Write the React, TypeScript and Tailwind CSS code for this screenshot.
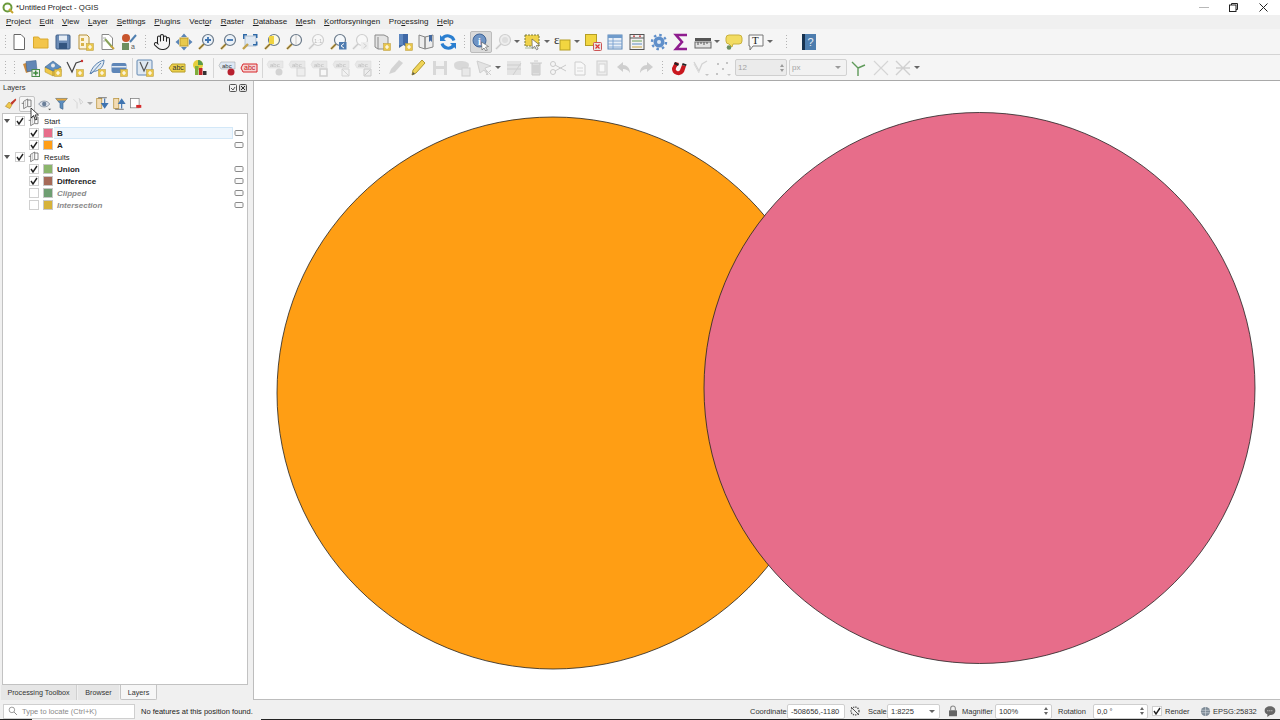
import React from "react";
import { Hand } from "lucide-react";

const Svg = ({ children, s = 18 }: { children: React.ReactNode; s?: number }) => (
  <svg width={s} height={s} viewBox="0 0 18 18" className="block shrink-0">
    {children}
  </svg>
);

const Badge = () => (
  <g>
    <rect x="10.5" y="10.5" width="7" height="7" fill="#e8c64c" stroke="#b9993a" strokeWidth="0.5" />
    <path d="M14 12v4M12 14h4" stroke="#fff" strokeWidth="1.2" />
  </g>
);

const Lens = ({ fill = "#fff", stroke = "#6b7a8a" }: { fill?: string; stroke?: string }) => (
  <g>
    <path d="M7 11l-5 5" stroke="#c2a24c" strokeWidth="2.4" />
    <path d="M7 11l-5 5" stroke="#333" strokeWidth="0.5" />
    <circle cx="11" cy="7" r="5.5" fill={fill} stroke={stroke} strokeWidth="1.2" />
  </g>
);

const Page = ({ stroke = "#777" }: { stroke?: string }) => (
  <path d="M4 1.5h7l3.5 3.5v11.5H4z" fill="#fff" stroke={stroke} strokeWidth="1" />
);

const Abc = ({ fill, c = "#333", y = 4 }: { fill: string; c?: string; y?: number }) => (
  <g>
    <path d={`M3 ${y}h14v7H3L1 ${y + 3.5}z`} fill={fill} stroke="#999" strokeWidth="0.5" />
    <text x="4" y={y + 5.7} fontSize="6" fontFamily="Liberation Sans" fill={c}>
      abc
    </text>
  </g>
);

const Gray = ({ children }: { children: React.ReactNode }) => (
  <div className="opacity-30 grayscale">{children}</div>
);

const Handle = ({ className = "w-[11px]" }: { className?: string }) => (
  <div className={`${className} h-[16px] flex justify-center shrink-0`}>
    <div className="w-[3px] h-[16px] bg-[radial-gradient(circle,#b4b4b4_0.8px,transparent_0.9px)] bg-[length:3px_3px]" />
  </div>
);

const Tool = ({ children, active }: { children: React.ReactNode; active?: boolean }) => (
  <div
    className={`w-[22px] h-[22px] flex items-center justify-center shrink-0 rounded-[2px] ${
      active ? "bg-[#dadada] border border-[#bcbcbc]" : ""
    }`}
  >
    {children}
  </div>
);

const Drop = ({ children }: { children: React.ReactNode }) => (
  <div className="w-[30px] h-[22px] flex items-center shrink-0">
    <div className="w-[22px] flex justify-center">{children}</div>
    <div className="w-0 h-0 border-x-[3px] border-x-transparent border-t-[3px] border-t-[#666]" />
  </div>
);

const Sep = ({ className }: { className: string }) => (
  <div className={`${className} h-[20px] flex justify-center shrink-0`}>
    <div className="w-px h-full bg-[#d6d6d6]" />
  </div>
);

const Menu = ({ text, u }: { text: string; u: number }) => (
  <span>
    {text.slice(0, u)}
    <span className="underline underline-offset-1">{text[u]}</span>
    {text.slice(u + 1)}
  </span>
);

const menus: [string, number][] = [
  ["Project", 0],
  ["Edit", 0],
  ["View", 0],
  ["Layer", 0],
  ["Settings", 0],
  ["Plugins", 0],
  ["Vector", 4],
  ["Raster", 0],
  ["Database", 0],
  ["Mesh", 0],
  ["Kortforsyningen", 0],
  ["Processing", 3],
  ["Help", 0],
];

const Row1 = () => (
  <div className="h-[26px] flex items-center pl-[3px] bg-[#f5f5f5] border-b border-[#d4d4d4]">
    <Handle className="w-[5px]" />
    <Tool>
      <Svg>
        <Page stroke="#666" />
      </Svg>
    </Tool>
    <Tool>
      <Svg>
        <path d="M1.5 4h5l1.5 2h8v9h-14.5z" fill="#f3c54a" stroke="#d9a92e" />
      </Svg>
    </Tool>
    <Tool>
      <Svg>
        <rect x="2" y="2" width="14" height="14" rx="1" fill="#6c8cb6" stroke="#3f5f88" />
        <rect x="5" y="2.5" width="8" height="5" fill="#e6edf5" />
        <rect x="5" y="10" width="8" height="6" fill="#33557f" />
      </Svg>
    </Tool>
    <Tool>
      <Svg>
        <path d="M3 2h8l2 2v12H3z" fill="#fbf3dc" stroke="#b58f35" />
        <rect x="5" y="5" width="3" height="3" fill="#d8b24a" />
        <rect x="5" y="10" width="3" height="3" fill="#d8b24a" />
        <Badge />
      </Svg>
    </Tool>
    <Tool>
      <Svg>
        <Page stroke="#888" />
        <path d="M7 6l7 8" stroke="#88a25a" strokeWidth="2" />
        <path d="M13 13l3 3" stroke="#c9a53e" strokeWidth="2" />
        <path d="M5 5h3M5 8h2" stroke="#aaa" />
      </Svg>
    </Tool>
    <Tool>
      <Svg>
        <circle cx="6" cy="5" r="4" fill="#c8552d" />
        <rect x="2" y="10" width="7" height="7" fill="#6d8f60" />
        <path d="M10 9l6-7" stroke="#4f7fb0" strokeWidth="2" />
        <text x="11" y="16" fontSize="7" fontFamily="Liberation Sans" fill="#555">
          a
        </text>
      </Svg>
    </Tool>
    <Handle />
    <Tool>
      <Hand size={18} strokeWidth={1.4} color="#222" />
    </Tool>
    <Tool>
      <Svg>
        <rect x="5" y="5" width="8" height="8" fill="#e8c94d" stroke="#b89a30" />
        <path d="M9 0.5l3 3.5H6zM9 17.5l3-3.5H6zM0.5 9l3.5 3V6zM17.5 9L14 12V6z" fill="#5b86b8" />
      </Svg>
    </Tool>
    <Tool>
      <Svg>
        <Lens fill="#eaf1f8" />
        <path d="M8 7h6M11 4v6" stroke="#3f74b0" strokeWidth="1.8" />
      </Svg>
    </Tool>
    <Tool>
      <Svg>
        <Lens fill="#eaf1f8" />
        <path d="M8 7h6" stroke="#3f74b0" strokeWidth="1.8" />
      </Svg>
    </Tool>
    <Tool>
      <Svg>
        <rect x="4" y="3" width="11" height="10" fill="#dfe8f2" stroke="#7d96b3" strokeWidth="0.5" />
        <path d="M2 1h4v1.5H3.5V6H2zM12 1h4.5v4H15V2.5h-3zM12 11h3V8.5h1.5V12.5H12z" fill="#2f6aa8" />
        <path d="M7 11l-5 5" stroke="#c2a24c" strokeWidth="2.4" />
      </Svg>
    </Tool>
    <Tool>
      <Svg>
        <Lens fill="#fdfbe0" />
        <rect x="6" y="3" width="5" height="8" fill="#f0d33f" />
      </Svg>
    </Tool>
    <Tool>
      <Svg>
        <Lens fill="#f7f7f7" />
        <path d="M11 2v10" stroke="#c9c9c9" strokeWidth="1" />
      </Svg>
    </Tool>
    <Tool>
      <Gray>
        <Svg>
          <Lens />
          <text x="7" y="9.5" fontSize="6" fontFamily="Liberation Sans" fill="#333">
            1:1
          </text>
        </Svg>
      </Gray>
    </Tool>
    <Tool>
      <Svg>
        <Lens fill="#f5f8fb" />
        <rect x="10" y="9" width="7.5" height="7.5" fill="#4f7cb0" />
        <path d="M15 10.5l-3 2.3 3 2.3" stroke="#fff" fill="none" />
      </Svg>
    </Tool>
    <Tool>
      <Gray>
        <Svg>
          <Lens />
          <rect x="10" y="9" width="7.5" height="7.5" fill="#ddd" />
          <path d="M12.5 10.5l3 2.3-3 2.3" stroke="#777" fill="none" />
        </Svg>
      </Gray>
    </Tool>
    <Tool>
      <Svg>
        <path d="M2 2h9l4 2v12H5l-3-2z" fill="#e4e4e4" stroke="#8a8a8a" />
        <path d="M5 4v12" stroke="#8a8a8a" />
        <Badge />
      </Svg>
    </Tool>
    <Tool>
      <Svg>
        <path d="M4 1h9v14l-4.5-3L4 15z" fill="#3f68a6" />
        <path d="M4 1h4v11H4z" fill="#5d87c0" />
        <Badge />
      </Svg>
    </Tool>
    <Tool>
      <Svg>
        <path d="M2 2l6 2v12l-6-2zM8 4l8-2v12l-8 2z" fill="#ededed" stroke="#868686" />
        <path d="M12 2h3v7l-1.5-1.5L12 9z" fill="#44699f" />
      </Svg>
    </Tool>
    <Tool>
      <Svg>
        <path d="M15 7.5A6.5 6.5 0 0 0 3.5 5.5" fill="none" stroke="#2b7fd0" strokeWidth="3" />
        <path d="M1 2v6h6z" fill="#2b7fd0" />
        <path d="M3 10.5A6.5 6.5 0 0 0 14.5 12.5" fill="none" stroke="#2b7fd0" strokeWidth="3" />
        <path d="M17 16v-6h-6z" fill="#2b7fd0" />
      </Svg>
    </Tool>
    <Handle />
    <Tool active>
      <Svg>
        <circle cx="7.5" cy="7.5" r="6.5" fill="#6f94c4" stroke="#3e6396" />
        <text x="6" y="11.5" fontSize="10" fontWeight="700" fontFamily="Liberation Serif" fill="#fff">
          i
        </text>
        <path d="M9.5 9l7 4.500-3 .7 1.800 3-1.500.8-1.800-3-2 2z" fill="#fff" stroke="#555" strokeWidth="0.6" />
      </Svg>
    </Tool>
    <Drop>
      <Gray>
        <Svg>
          <Lens fill="#ddd" />
          <circle cx="11" cy="7" r="3" fill="#aaa" />
        </Svg>
      </Gray>
    </Drop>
    <Drop>
      <Svg>
        <rect x="1" y="2" width="14" height="11" fill="#efd24a" stroke="#7a7a3a" strokeDasharray="2 1" />
        <path d="M1 14h11v2H1z" fill="#cfd8c8" />
        <path d="M8 6l7.5 6-3.2.5 1.8 3.5-1.6.8-1.8-3.5-2.5 2z" fill="#fff" stroke="#444" strokeWidth="0.6" />
      </Svg>
    </Drop>
    <Drop>
      <Svg>
        <rect x="6" y="7" width="10" height="10" fill="#f2d640" stroke="#b59e25" />
        <text x="0" y="11" fontSize="13" fontFamily="Liberation Serif" fill="#333">
          ε
        </text>
      </Svg>
    </Drop>
    <Tool>
      <Svg>
        <rect x="1.5" y="1.5" width="11" height="11" fill="#f2d640" stroke="#b59e25" />
        <rect x="9.5" y="9.5" width="8" height="8" rx="1" fill="#e6e6e6" stroke="#c55" />
        <path d="M11.5 11.5l4 4M15.5 11.5l-4 4" stroke="#d33" strokeWidth="1.2" />
      </Svg>
    </Tool>
    <Tool>
      <Svg>
        <rect x="2" y="2" width="14" height="14" fill="#e8eff7" stroke="#5c87b8" />
        <rect x="2" y="2" width="14" height="3" fill="#6f9bcb" />
        <path d="M2 8h14M2 11h14M2 14h14M7 5v11" stroke="#6f9bcb" strokeWidth="0.8" />
      </Svg>
    </Tool>
    <Tool>
      <Svg>
        <rect x="2" y="1.5" width="14" height="15" fill="#f2f2f2" stroke="#555" />
        <path d="M2 5h14" stroke="#555" />
        <path d="M4 8h10" stroke="#6a9e56" />
        <path d="M4 11h10" stroke="#5f8bc0" />
        <path d="M4 14h10" stroke="#c9a53e" />
        <circle cx="6" cy="3.2" r="1" fill="#c55" />
        <circle cx="12" cy="3.2" r="1" fill="#c55" />
      </Svg>
    </Tool>
    <Tool>
      <Svg>
        <circle cx="9" cy="9" r="5.5" fill="#5f8fca" />
        <circle cx="9" cy="9" r="7" fill="none" stroke="#5f8fca" strokeWidth="2.4" strokeDasharray="2.5 3" />
        <circle cx="9" cy="9" r="2" fill="#dfe9f5" />
      </Svg>
    </Tool>
    <Tool>
      <Svg>
        <path d="M15 2H4l6 7-6 7h11" fill="none" stroke="#8f1d8f" strokeWidth="2.6" />
      </Svg>
    </Tool>
    <Drop>
      <Svg>
        <rect x="1" y="5" width="16" height="3" fill="#555" />
        <rect x="1" y="9" width="16" height="6" fill="#e2e2e2" stroke="#666" />
        <path d="M4 9v3M7 9v2M10 9v3M13 9v2" stroke="#555" />
      </Svg>
    </Drop>
    <div className="w-px shrink-0" />
    <Tool>
      <Svg>
        <path d="M4 2h10a3 3 0 0 1 3 3v3a3 3 0 0 1-3 3H8l-1 3-3-3a3 3 0 0 1-3-3V5a3 3 0 0 1 3-3z" fill="#f2dc62" stroke="#c9b13e" />
        <circle cx="4" cy="14.5" r="2.3" fill="#6d9060" />
      </Svg>
    </Tool>
    <Drop>
      <Svg>
        <path d="M2 2h14v11H6l-3 4v-4H2z" fill="#fafafa" stroke="#777" />
        <text x="5" y="11" fontSize="11" fontFamily="Liberation Serif" fill="#222">
          T
        </text>
      </Svg>
    </Drop>
    <Handle className="w-[23px]" />
    <Tool>
      <Svg>
        <rect x="2" y="1" width="14" height="16" fill="#4d7dae" />
        <rect x="2" y="1" width="3" height="16" fill="#17324f" />
        <text x="7.5" y="13" fontSize="11" fontFamily="Liberation Sans" fill="#e6eef6">
          ?
        </text>
      </Svg>
    </Tool>
  </div>
);

const GrayAbc = ({ kind }: { kind: number }) => (
  <Gray>
    <Svg>
      <Abc fill="#ccc" y={2} />
      {kind === 0 && <circle cx="13" cy="13" r="3.5" fill="#888" />}
      {kind === 1 && <rect x="9" y="9" width="8" height="8" fill="#ddd" stroke="#888" />}
      {kind === 2 && <rect x="10" y="10" width="7" height="7" fill="#fff" stroke="#777" strokeWidth="1.5" />}
      {kind === 3 && <path d="M10 10h7v7h-7zM10 10l7 7" fill="#eee" stroke="#888" />}
      {kind === 4 && <path d="M10 10h7v7h-7zM11 16l5-5" fill="#ddd" stroke="#666" />}
    </Svg>
  </Gray>
);

const Row2 = () => (
  <div className="h-[26px] flex items-center pl-[3px] bg-[#f5f5f5] border-b border-[#a9a9a9]">
    <Handle className="w-[5px]" />
    <Handle className="w-[12px]" />
    <Tool>
      <Svg>
        <path d="M1 5l9-3 3 9-9 3z" fill="#c98a3e" />
        <path d="M4 2.5l10-1 1 10-10 1z" fill="#6287b5" stroke="#3d5f8a" strokeWidth="0.5" />
        <rect x="10" y="10.5" width="7.5" height="7" fill="#eee" stroke="#4a8b4a" />
        <path d="M13.7 11.5v5M11.2 14h5" stroke="#3e8a3e" strokeWidth="1.5" />
      </Svg>
    </Tool>
    <Tool>
      <Svg>
        <path d="M1 8l8 4v5l-8-4zM9 12l8-4v5l-8 4z" fill="#f0c94b" stroke="#a98c2a" strokeWidth="0.5" />
        <path d="M1 8l8-6 8 6-8 4z" fill="#5f8ec0" stroke="#33577f" strokeWidth="0.5" />
        <circle cx="9" cy="6.5" r="2" fill="#e9e9e9" />
        <Badge />
      </Svg>
    </Tool>
    <Tool>
      <Svg>
        <path d="M1 3l5 10 4-9 6-2" fill="none" stroke="#444" strokeWidth="1.2" />
        <circle cx="16" cy="2" r="1.2" fill="#c33" />
        <Badge />
      </Svg>
    </Tool>
    <Tool>
      <Svg>
        <path d="M2 15C4 8 9 3 16 1c0 6-4 10-8 11-2 .5-4 1-6 3z" fill="#dfe9f3" stroke="#5b83b0" />
        <path d="M3 15L13 4" stroke="#5b83b0" />
        <Badge />
      </Svg>
    </Tool>
    <Tool>
      <Svg>
        <rect x="1.5" y="4" width="15" height="10" rx="2" fill="#5e86b8" />
        <rect x="1.5" y="7" width="15" height="1.5" fill="#dfe8f2" />
        <Badge />
      </Svg>
    </Tool>
    <Sep className="w-[4px]" />
    <Tool>
      <Svg>
        <rect x="1" y="1" width="15" height="15" rx="1" fill="#dfe8f1" stroke="#6288b2" />
        <path d="M4 3l4 9 4-9" fill="none" stroke="#555" strokeWidth="1.2" />
        <Badge />
      </Svg>
    </Tool>
    <Handle className="w-[10px]" />
    <Tool>
      <Svg>
        <path d="M4 5h13v8H4L1 9z" fill="#ecd04a" stroke="#b89e2a" />
        <text x="4.5" y="11" fontSize="7" fontFamily="Liberation Sans" fill="#333">
          abc
        </text>
      </Svg>
    </Tool>
    <div className="w-px shrink-0" />
    <Tool>
      <Svg>
        <circle cx="7" cy="6" r="5" fill="#e6cf3c" />
        <path d="M7 6V1a5 5 0 0 1 5 5z" fill="#5a9a4a" />
        <rect x="4" y="7" width="3.5" height="9" fill="#7fae3c" />
        <rect x="8" y="9" width="3.5" height="7" fill="#c3272b" />
        <rect x="12" y="12" width="3.5" height="4" fill="#333" />
      </Svg>
    </Tool>
    <Sep className="w-[5px]" />
    <Tool>
      <Svg>
        <Abc fill="#dde8f4" y={3} />
        <circle cx="13" cy="13" r="3.5" fill="#b8212f" />
      </Svg>
    </Tool>
    <Tool>
      <Svg>
        <path d="M3 5h14v8H3L1 9z" fill="#f6d3d3" stroke="#d7262b" />
        <text x="4" y="11" fontSize="7" fontFamily="Liberation Sans" fill="#c2171c">
          abc
        </text>
      </Svg>
    </Tool>
    <Sep className="w-[4px]" />
    {[0, 1, 2, 3, 4].map((k) => (
      <Tool key={k}>
        <GrayAbc kind={k} />
      </Tool>
    ))}
    <Handle />
    <Tool>
      <Gray>
        <Svg>
          <path d="M2 15l2-5 8-9 4 3-8 9z" fill="#888" />
        </Svg>
      </Gray>
    </Tool>
    <Tool>
      <Svg>
        <path d="M3 16l1-5 9-10 3 3-9 10z" fill="#f0d458" stroke="#b19a2f" />
        <path d="M3 16l1-3 2 2z" fill="#555" />
      </Svg>
    </Tool>
    <Tool>
      <Gray>
        <Svg>
          <rect x="2" y="2" width="14" height="14" fill="#999" />
          <rect x="5" y="2" width="8" height="5" fill="#eee" />
          <rect x="5" y="10" width="8" height="6" fill="#eee" />
        </Svg>
      </Gray>
    </Tool>
    <Tool>
      <Gray>
        <Svg>
          <path d="M1 6c0-3 3-4 7-4s8 1 8 4-3 5-8 5-7-2-7-5z" fill="#999" />
          <rect x="9" y="9" width="8" height="8" fill="#ccc" stroke="#777" />
        </Svg>
      </Gray>
    </Tool>
    <Drop>
      <Gray>
        <Svg>
          <path d="M2 2l14 5-6 2 3 7-4-5-4 3z" fill="#bbb" stroke="#777" />
          <path d="M11 11l5 5M16 11l-5 5" stroke="#777" />
        </Svg>
      </Gray>
    </Drop>
    <Tool>
      <Gray>
        <Svg>
          <path d="M2 2h14v14H2z" fill="#bbb" />
          <path d="M2 6h14M2 10h14M16 4L8 16" stroke="#777" />
        </Svg>
      </Gray>
    </Tool>
    <Tool>
      <Gray>
        <Svg>
          <path d="M3 4h12M5 4v12h8V4M7 2h4" fill="#aaa" stroke="#666" />
          <path d="M7 6v8M9 6v8M11 6v8" stroke="#666" />
        </Svg>
      </Gray>
    </Tool>
    <Tool>
      <Gray>
        <Svg>
          <circle cx="4" cy="5" r="2.5" fill="none" stroke="#666" />
          <circle cx="4" cy="13" r="2.5" fill="none" stroke="#666" />
          <path d="M6 6l11 6M6 12l11-6" stroke="#666" />
        </Svg>
      </Gray>
    </Tool>
    <Tool>
      <Gray>
        <Svg>
          <path d="M4 3h6l4 3v10H4z" fill="#fff" stroke="#777" />
          <path d="M6 9h6M6 12h6" stroke="#999" />
        </Svg>
      </Gray>
    </Tool>
    <Tool>
      <Gray>
        <Svg>
          <rect x="4" y="2" width="10" height="14" fill="#ddd" stroke="#777" />
          <rect x="6" y="5" width="6" height="8" fill="#fff" stroke="#888" />
        </Svg>
      </Gray>
    </Tool>
    <Tool>
      <Gray>
        <Svg>
          <path d="M8 3L2 8l6 5v-3c3 0 5 1 7 4 0-5-3-8-7-8z" fill="#777" />
        </Svg>
      </Gray>
    </Tool>
    <Tool>
      <Gray>
        <Svg>
          <path d="M10 3l6 5-6 5v-3c-3 0-5 1-7 4 0-5 3-8 7-8z" fill="#777" />
        </Svg>
      </Gray>
    </Tool>
    <Handle />
    <Tool>
      <Svg>
        <path d="M5 3L2 9a6.5 6.5 0 0 0 12 4l2-6-4-1-2 5a2 2 0 0 1-4-2l3-5z" fill="#c9171e" />
        <path d="M5 3l4 2-1 2-4-2z" fill="#222" />
        <path d="M16 7l-4-1 .7-2 4 1.5z" fill="#222" />
      </Svg>
    </Tool>
    <Tool>
      <Gray>
        <Svg>
          <path d="M2 3l5 9 3-7 5-3" fill="none" stroke="#5a9a4a" strokeWidth="1.3" />
          <path d="M2 5l5 9" stroke="#999" />
          <path d="M13 15h4l-2 2z" fill="#555" />
        </Svg>
      </Gray>
    </Tool>
    <Tool>
      <Gray>
        <Svg>
          <path d="M3 4h2v2H3zM12 3h2v2h-2zM8 9h2v2H8zM2 14h2v2H2z" fill="#555" />
          <path d="M13 15h4l-2 2z" fill="#555" />
        </Svg>
      </Gray>
    </Tool>
    <div className="w-[1px] shrink-0" />
    <div className="w-[52px] h-[17px] flex items-center justify-between bg-[#ebebeb] border border-[#cfcfcf] rounded-[2px] pl-[2px] text-[#a5a5a5]">
      <span>12</span>
      <span className="w-[9px] flex flex-col items-center gap-[2px]">
        <span className="w-0 h-0 border-x-[2px] border-x-transparent border-b-[3px] border-b-[#9a9a9a]" />
        <span className="w-0 h-0 border-x-[2px] border-x-transparent border-t-[3px] border-t-[#9a9a9a]" />
      </span>
    </div>
    <div className="w-[58px] ml-[2px] h-[17px] flex items-center justify-between bg-[#f2f2f2] border border-[#d2d2d2] rounded-[2px] pl-[2px] pr-[5px] text-[#a5a5a5]">
      <span>px</span>
      <span className="w-0 h-0 border-x-[3px] border-x-transparent border-t-[3px] border-t-[#9a9a9a]" />
    </div>
    <div className="w-px shrink-0" />
    <Tool>
      <Svg>
        <path d="M8 9l-6-6M8 9l7-3M8 9v8" stroke="#5f9a5a" strokeWidth="1.4" />
      </Svg>
    </Tool>
    <Tool>
      <Gray>
        <Svg>
          <path d="M2 2l14 14M16 2L2 16" stroke="#6a9a6a" strokeWidth="1.2" />
        </Svg>
      </Gray>
    </Tool>
    <Drop>
      <Gray>
        <Svg>
          <path d="M2 2l7 7-7 7M16 2L9 9l7 7M2 9h14" stroke="#5a8a5a" strokeWidth="1.4" fill="none" />
        </Svg>
      </Gray>
    </Drop>
  </div>
);

const TreeIcon = () => (
  <Svg s={12}>
    <path d="M4 5l6-3.5v11L4 16z" fill="#fff" stroke="#666" strokeWidth="1.2" />
    <path d="M10 3h5v10h-5M1 8h3" fill="none" stroke="#666" strokeWidth="1.2" />
    <path d="M7 4v9" stroke="#aaa" />
  </Svg>
);

const Check = ({ on }: { on: boolean }) => (
  <div className="w-[10px] h-[10px] bg-white border border-[#d0d0d0] flex items-center justify-center shrink-0">
    {on && (
      <svg width="8" height="8" viewBox="0 0 8 8">
        <path d="M1 4l2 3 4-6" fill="none" stroke="#222" strokeWidth="1.4" />
      </svg>
    )}
  </div>
);

const Indicator = () => (
  <svg width="10" height="8" viewBox="0 0 10 8" className="shrink-0">
    <rect x="1" y="1.5" width="8" height="5" rx="1" fill="#fafafa" stroke="#8a8a8a" />
  </svg>
);

const GroupRow = ({ name }: { name: string }) => (
  <div className="h-[12px] flex items-center">
    <div className="ml-[1px] w-0 h-0 border-x-[3.5px] border-x-transparent border-t-[4px] border-t-[#555]" />
    <div className="ml-[5px]">
      <Check on />
    </div>
    <div className="ml-[3px]">
      <TreeIcon />
    </div>
    <span className="ml-[4px] pt-[1px] text-[#222] text-[7.7px]">{name}</span>
  </div>
);

const LayerRow = ({
  name,
  swatch,
  on,
  selected,
  className,
}: {
  name: string;
  swatch: string;
  on: boolean;
  selected?: boolean;
  className: string;
}) => (
  <div className="h-[12px] flex items-center relative">
    <div className="ml-[26px]">
      <Check on={on} />
    </div>
    <div className="ml-[4px] w-[10px] h-[10px] border border-[#c8c8c8] shrink-0" style={{ backgroundColor: swatch }} />
    <div
      className={`ml-[1px] h-[12px] flex-1 flex items-center pl-[3px] ${
        selected ? "bg-[#eef6fd] border-y border-r border-[#d3e8f8]" : ""
      }`}
    >
      <span className={`pt-[1px] ${className}`}>{name}</span>
    </div>
    <div className="w-[11px] mr-[3px] flex justify-center">
      <Indicator />
    </div>
  </div>
);

const LayersPanel = () => (
  <div className="w-[253px] shrink-0 flex flex-col relative">
    <div className="h-[13px] flex items-center justify-between pl-[3px] pr-[6px] text-[#333]">
      <span className="text-[7.5px]">Layers</span>
      <div className="flex gap-[2px]">
        <svg width="8" height="8" viewBox="0 0 8 8">
          <rect x="0.5" y="0.5" width="7" height="7" rx="1" fill="none" stroke="#555" />
          <path d="M2 4l2 2 2-3" fill="none" stroke="#555" />
        </svg>
        <svg width="8" height="8" viewBox="0 0 8 8">
          <rect x="0.5" y="0.5" width="7" height="7" rx="1" fill="#ddd" stroke="#555" />
          <path d="M2 2l4 4M6 2L2 6" stroke="#333" />
        </svg>
      </div>
    </div>
    <div className="h-[19px] flex items-center pl-[3px]">
      <div className="w-[14px] flex justify-center">
        <Svg s={13}>
          <path d="M2 13l5-6 4 4-3 5z" fill="#f0c94b" stroke="#b58f35" />
          <path d="M9 8l7-6 1 2-6 7z" fill="#c0392b" />
        </Svg>
      </div>
      <div className="ml-[2px] w-[16px] h-[16px] flex items-center justify-center bg-[#f6f6f6] border border-[#c4c4c4] rounded-[2px]">
        <TreeIcon />
      </div>
      <div className="ml-[1px] w-[18px] flex justify-center">
        <Svg s={14}>
          <path d="M1 9c3-5 11-5 14 0-3 5-11 5-14 0z" fill="#dfe4ec" stroke="#7a8798" />
          <circle cx="8" cy="9" r="2.8" fill="#6a7f99" />
          <path d="M13 15h4l-2 2z" fill="#555" />
        </Svg>
      </div>
      <div className="w-[14px] flex justify-center">
        <Svg s={13}>
          <path d="M1 2h16l-6 7v8l-4-2V9z" fill="#5b8dbf" stroke="#3c668f" />
          <path d="M1 2h16l-2 3H3z" fill="#e5a63b" />
        </Svg>
      </div>
      <div className="ml-[3px] w-[23px] flex items-center justify-center gap-[2px]">
        <Gray>
          <Svg s={13}>
            <path d="M2 3l5 5v8M10 2l5 5-3 3z" fill="none" stroke="#777" />
          </Svg>
        </Gray>
        <span className="w-0 h-0 border-x-[3px] border-x-transparent border-t-[3px] border-t-[#aaa]" />
      </div>
      <div className="w-[16px] flex justify-center">
        <Svg s={13}>
          <rect x="1" y="2" width="7" height="14" fill="#f3dcb4" stroke="#b58f35" />
          <path d="M12 2v8M8 9l4 6 4-6z" fill="#3f74b0" stroke="#3f74b0" strokeWidth="1.6" />
          <path d="M3 1h12" stroke="#444" />
        </Svg>
      </div>
      <div className="ml-[1px] w-[16px] flex justify-center">
        <Svg s={13}>
          <rect x="1" y="2" width="7" height="14" fill="#f3dcb4" stroke="#b58f35" />
          <path d="M12 16V8M8 9l4-6 4 6z" fill="#3f74b0" stroke="#3f74b0" strokeWidth="1.6" />
          <path d="M3 17h12" stroke="#444" />
        </Svg>
      </div>
      <div className="w-[16px] flex justify-center">
        <Svg s={13}>
          <rect x="2" y="2" width="12" height="13" fill="#fff" stroke="#777" />
          <rect x="10" y="11" width="7" height="4" fill="#d62c2c" />
        </Svg>
      </div>
    </div>
    <div className="flex-1 ml-[2px] mr-[5px] bg-white border border-[#c2c2c2] pt-[1px]">
      <GroupRow name="Start" />
      <LayerRow name="B" swatch="#e76d8a" on selected className="font-bold text-[#222]" />
      <LayerRow name="A" swatch="#ff9e17" on className="font-bold text-[#222]" />
      <GroupRow name="Results" />
      <LayerRow name="Union" swatch="#8bb56c" on className="font-bold text-[#222]" />
      <LayerRow name="Difference" swatch="#a66a58" on className="font-bold text-[#222]" />
      <LayerRow name="Clipped" swatch="#6f9e72" on={false} className="italic font-bold text-[#8a8a8a]" />
      <LayerRow name="Intersection" swatch="#d6b23a" on={false} className="italic font-bold text-[#8a8a8a]" />
    </div>
    <div className="h-[15px] flex items-start pl-[1px] text-[#333] text-[7.2px] whitespace-nowrap">
      <div className="w-[76px] h-[15px] pt-[1px] flex items-center justify-center bg-[#e6e6e6] border-r border-[#d0d0d0]">
        Processing Toolbox
      </div>
      <div className="w-[41px] ml-[1px] h-[15px] pt-[1px] flex items-center justify-center bg-[#e6e6e6]">Browser</div>
      <div className="w-[37px] ml-[1px] h-[15px] pt-[1px] flex items-center justify-center bg-[#f6f6f6] border-x border-b border-[#c4c4c4] rounded-b-[2px]">
        Layers
      </div>
    </div>
    <svg width="10" height="14" viewBox="0 0 10 14" className="absolute left-[30px] top-[26px]">
      <path d="M1 1v10l2.5-2.5L5.5 13l1.5-.7L5 8h3.5z" fill="#fff" stroke="#111" strokeWidth="0.8" />
    </svg>
  </div>
);

const StatusInput = ({ className, text, kind }: { className: string; text: string; kind: "none" | "combo" | "spin" }) => (
  <div className={`${className} h-[15px] bg-white border border-[#cfcfcf] rounded-[2px] flex items-center justify-between pl-[3px] pr-[2px] shrink-0`}>
    <span className="whitespace-nowrap pt-[1px]">{text}</span>
    {kind === "combo" && (
      <span className="w-0 h-0 mr-[2px] border-x-[3px] border-x-transparent border-t-[3px] border-t-[#666]" />
    )}
    {kind === "spin" && (
      <span className="flex flex-col items-center gap-[2px] w-[7px]">
        <span className="w-0 h-0 border-x-[2.5px] border-x-transparent border-b-[3px] border-b-[#666]" />
        <span className="w-0 h-0 border-x-[2.5px] border-x-transparent border-t-[3px] border-t-[#666]" />
      </span>
    )}
  </div>
);

const StatusBar = () => (
  <div className="h-[20px] flex items-center text-[#333] text-[7.5px] shrink-0 pt-[2px] relative">
    <div className="ml-[3px] w-[132px] h-[15px] bg-white border border-[#cfcfcf] flex items-center pl-[4px] gap-[4px] text-[#8a8a8a] shrink-0">
      <Svg s={10}>
        <circle cx="7" cy="7" r="5" fill="none" stroke="#8a8a8a" strokeWidth="1.5" />
        <path d="M11 11l5 5" stroke="#8a8a8a" strokeWidth="1.8" />
      </Svg>
      <span className="pt-[1px]">Type to locate (Ctrl+K)</span>
    </div>
    <span className="ml-[6px] pt-[1px] text-[#222] whitespace-nowrap">No features at this position found.</span>
    <div className="flex-1" />
    <span className="w-[37px] pt-[1px] shrink-0">Coordinate</span>
    <StatusInput className="w-[58px]" text="-508656,-1180" kind="none" />
    <div className="ml-[4px]">
      <Svg s={12}>
        <path d="M3 3l12 12" stroke="#444" strokeWidth="1.4" />
        <circle cx="9" cy="9" r="6" fill="none" stroke="#555" strokeWidth="2" strokeDasharray="2 1.5" />
      </Svg>
    </div>
    <span className="ml-[7px] w-[16px] pt-[1px] shrink-0">Scale</span>
    <StatusInput className="ml-[3px] w-[53px]" text="1:8225" kind="combo" />
    <div className="ml-[7px]">
      <Svg s={12}>
        <rect x="3" y="8" width="12" height="9" rx="1" fill="#666" />
        <path d="M5.5 8V5a3.5 3.5 0 0 1 7 0v3" fill="none" stroke="#888" strokeWidth="1.6" />
      </Svg>
    </div>
    <span className="ml-[3px] w-[30px] pt-[1px] shrink-0">Magnifier</span>
    <StatusInput className="ml-[3px] w-[57px]" text="100%" kind="spin" />
    <span className="ml-[6px] w-[28px] pt-[1px] shrink-0">Rotation</span>
    <StatusInput className="ml-[7px] w-[55px]" text="0,0 °" kind="spin" />
    <div className="ml-[4px]">
      <Check on />
    </div>
    <span className="ml-[3px] w-[24px] pt-[1px] shrink-0">Render</span>
    <div className="ml-[11px]">
      <Svg s={11}>
        <circle cx="9" cy="9" r="7.5" fill="#7d8a96" />
        <path d="M2 7h14M2 11h14M9 1.5v15" stroke="#d5dbe0" />
      </Svg>
    </div>
    <span className="ml-[2px] w-[41px] pt-[1px] shrink-0">EPSG:25832</span>
    <div className="ml-[10px] mr-[4px]">
      <Svg s={12}>
        <path d="M9 2c4.5 0 8 2.5 8 6.5s-3.5 6.5-8 6.5l-4 3v-4C2.5 13 1 11 1 8.5 1 4.5 4.5 2 9 2z" fill="#666" />
        <path d="M5 8.5h8" stroke="#ddd" strokeWidth="1.6" strokeDasharray="1.5 1.5" />
      </Svg>
    </div>
    <div className="absolute left-0 w-[32px] bottom-0 h-px bg-[#222]" />
    <div className="absolute left-[261px] right-0 bottom-0 h-px bg-[#222]" />
  </div>
);

export default function App() {
  return (
    <div className="w-[1280px] h-[720px] overflow-hidden flex flex-col bg-[#f0f0f0] font-['Liberation_Sans',sans-serif] text-[8px] leading-none">
      <div className="h-[15px] bg-white flex items-center shrink-0 relative">
        <div className="ml-[2px]">
          <svg width="12" height="12" viewBox="0 0 12 12" className="block">
            <circle cx="5.5" cy="5.5" r="4" fill="none" stroke="#6b9a3c" strokeWidth="2" />
            <path d="M7 7l4 4" stroke="#c6a52d" strokeWidth="2" />
          </svg>
        </div>
        <span className="ml-[2px] text-[7.8px] text-[#222]">*Untitled Project - QGIS</span>
        <div className="ml-auto flex items-center">
          <div className="w-[10px] h-px bg-[#b8b8b8] mr-[20px]" />
          <svg width="9" height="9" viewBox="0 0 9 9" className="mr-[21px]">
            <rect x="0.5" y="2" width="6.5" height="6.5" fill="#fff" stroke="#222" />
            <path d="M2.5 2V0.5h6v6H7" fill="none" stroke="#222" />
          </svg>
          <svg width="9" height="9" viewBox="0 0 9 9" className="mr-[12px]">
            <path d="M0.5 0.5l8 8M8.5 0.5l-8 8" stroke="#222" />
          </svg>
        </div>
      </div>
      <div className="h-[14px] flex items-center gap-[8.7px] pl-[6px] text-[#222] text-[8px] shrink-0">
        {menus.map(([m, u]) => (
          <Menu key={m} text={m} u={u} />
        ))}
      </div>
      <Row1 />
      <Row2 />
      <div className="flex-1 flex min-h-0">
        <LayersPanel />
        <div className="flex-1 bg-white border-l border-b border-[#bdbdbd]">
          <svg viewBox="254 81 1026 618" className="block w-full h-full">
            <circle cx="553" cy="393" r="276" fill="#ff9e14" stroke="#222" strokeWidth="0.8" />
            <circle cx="979.5" cy="388" r="275.5" fill="#e76d8a" stroke="#222" strokeWidth="0.8" />
          </svg>
        </div>
      </div>
      <StatusBar />
    </div>
  );
}
